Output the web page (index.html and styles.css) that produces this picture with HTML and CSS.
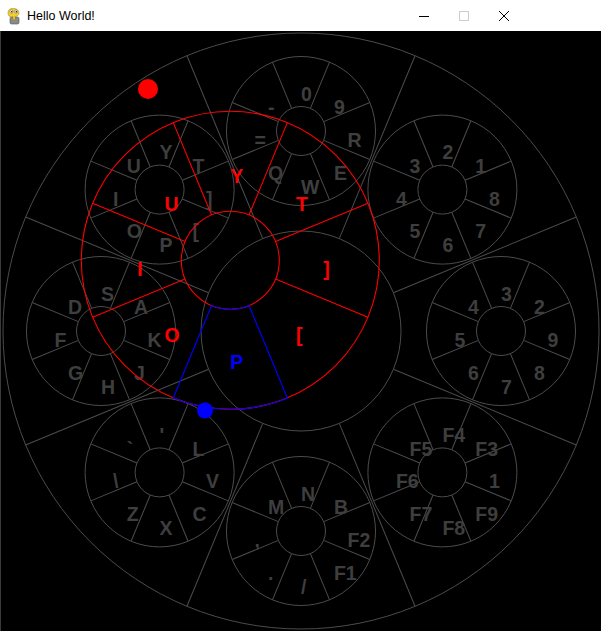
FILE: index.html
```html
<!DOCTYPE html>
<html lang="en">
<head>
<meta charset="utf-8">
<title>Hello World!</title>
<link rel="stylesheet" href="styles.css">
</head>
<body>
<div class="window">
  <header class="titlebar">
    <svg class="app-icon" width="16" height="18" viewBox="0 0 16 18" aria-hidden="true">
      <rect class="pad" x="4" y="10" width="9" height="7" rx="1.5"/>
      <path class="snake" d="M3 9 C1 6 2 2 6 1.5 C10 1 13 3 13 6 C13 8 11 9.5 9 9.5 L9 12 C9 13 7 13 7 12 L7 9.5 C5.5 9.5 4 9.8 3 9 Z"/>
      <circle class="eye" cx="5.5" cy="4.5" r="1.6"/>
      <circle class="eye" cx="10" cy="4.5" r="1.6"/>
      <circle class="pupil" cx="5.8" cy="4.7" r="0.7"/>
      <circle class="pupil" cx="10.3" cy="4.7" r="0.7"/>
    </svg>
    <span class="title">Hello World!</span>
    <div class="controls">
      <span class="ctl"><svg width="10" height="10" viewBox="0 0 10 10"><line class="ico" x1="0" y1="5.5" x2="10" y2="5.5"/></svg></span>
      <span class="ctl"><svg width="10" height="10" viewBox="0 0 10 10"><rect class="ico dim" x="0.5" y="0.5" width="9" height="9"/></svg></span>
      <span class="ctl"><svg width="10" height="10" viewBox="0 0 10 10"><path class="ico" d="M0 0 L10 10 M10 0 L0 10"/></svg></span>
    </div>
  </header>
  <main class="canvas">
    <svg class="scene" width="601" height="600" viewBox="0 31 601 600">
      <defs>
        <g id="wheel">
          <circle r="74.5"/>
          <circle r="24.5"/>
          <line x1="24.5" x2="74.5" transform="rotate(22.5)"/>
          <line x1="24.5" x2="74.5" transform="rotate(67.5)"/>
          <line x1="24.5" x2="74.5" transform="rotate(112.5)"/>
          <line x1="24.5" x2="74.5" transform="rotate(157.5)"/>
          <line x1="24.5" x2="74.5" transform="rotate(-22.5)"/>
          <line x1="24.5" x2="74.5" transform="rotate(-67.5)"/>
          <line x1="24.5" x2="74.5" transform="rotate(-112.5)"/>
          <line x1="24.5" x2="74.5" transform="rotate(-157.5)"/>
        </g>
      </defs>

      <g class="grid">
        <circle cx="301" cy="331" r="298"/>
        <circle cx="301" cy="331" r="100"/>
        <g transform="translate(301,331)">
          <line x1="100" x2="298" transform="rotate(22.5)"/>
          <line x1="100" x2="298" transform="rotate(67.5)"/>
          <line x1="100" x2="298" transform="rotate(112.5)"/>
          <line x1="100" x2="298" transform="rotate(157.5)"/>
          <line x1="100" x2="298" transform="rotate(-22.5)"/>
          <line x1="100" x2="298" transform="rotate(-67.5)"/>
          <line x1="100" x2="298" transform="rotate(-112.5)"/>
          <line x1="100" x2="298" transform="rotate(-157.5)"/>
        </g>
        <use href="#wheel" x="301" y="131"/>
        <use href="#wheel" x="442.4" y="189.6"/>
        <use href="#wheel" x="501" y="331"/>
        <use href="#wheel" x="442.4" y="472.4"/>
        <use href="#wheel" x="301" y="531"/>
        <use href="#wheel" x="159.6" y="472.4"/>
        <use href="#wheel" x="101" y="331"/>
        <use href="#wheel" x="159.6" y="189.6"/>
      </g>

      <g class="keys">
        <g transform="translate(301,131)">
          <text x="0" y="-30.5">0</text><text x="32.9" y="-16.9">9</text><text x="46.5" y="16">R</text><text x="32.9" y="48.9">E</text>
          <text x="0" y="62.5">W</text><text x="-32.9" y="48.9">Q</text><text x="-46.5" y="16">=</text><text x="-32.9" y="-16.9">-</text>
        </g>
        <g transform="translate(442.4,189.6)">
          <text x="0" y="-30.5">2</text><text x="32.9" y="-16.9">1</text><text x="46.5" y="16">8</text><text x="32.9" y="48.9">7</text>
          <text x="0" y="62.5">6</text><text x="-32.9" y="48.9">5</text><text x="-46.5" y="16">4</text><text x="-32.9" y="-16.9">3</text>
        </g>
        <g transform="translate(501,331)">
          <text x="0" y="-30.5">3</text><text x="32.9" y="-16.9">2</text><text x="46.5" y="16">9</text><text x="32.9" y="48.9">8</text>
          <text x="0" y="62.5">7</text><text x="-32.9" y="48.9">6</text><text x="-46.5" y="16">5</text><text x="-32.9" y="-16.9">4</text>
        </g>
        <g transform="translate(442.4,472.4)">
          <text x="0" y="-30.5">F4</text><text x="32.9" y="-16.9">F3</text><text x="46.5" y="16">1</text><text x="32.9" y="48.9">F9</text>
          <text x="0" y="62.5">F8</text><text x="-32.9" y="48.9">F7</text><text x="-46.5" y="16">F6</text><text x="-32.9" y="-16.9">F5</text>
        </g>
        <g transform="translate(301,531)">
          <text x="0" y="-30.5">N</text><text x="32.9" y="-16.9">B</text><text x="46.5" y="16">F2</text><text x="32.9" y="48.9">F1</text>
          <text x="0" y="62.5">/</text><text x="-32.9" y="48.9">.</text><text x="-46.5" y="16">,</text><text x="-32.9" y="-16.9">M</text>
        </g>
        <g transform="translate(159.6,472.4)">
          <text x="0" y="-30.5">'</text><text x="32.9" y="-16.9">L</text><text x="46.5" y="16">V</text><text x="32.9" y="48.9">C</text>
          <text x="0" y="62.5">X</text><text x="-32.9" y="48.9">Z</text><text x="-46.5" y="16">\</text><text x="-32.9" y="-16.9">`</text>
        </g>
        <g transform="translate(101,331)">
          <text x="0" y="-30.5">S</text><text x="32.9" y="-16.9">A</text><text x="46.5" y="16">K</text><text x="32.9" y="48.9">J</text>
          <text x="0" y="62.5">H</text><text x="-32.9" y="48.9">G</text><text x="-46.5" y="16">F</text><text x="-32.9" y="-16.9">D</text>
        </g>
        <g transform="translate(159.6,189.6)">
          <text x="0" y="-30.5">Y</text><text x="32.9" y="-16.9">T</text><text x="46.5" y="16">]</text><text x="32.9" y="48.9">[</text>
          <text x="0" y="62.5">P</text><text x="-32.9" y="48.9">O</text><text x="-46.5" y="16">I</text><text x="-32.9" y="-16.9">U</text>
        </g>
      </g>

      <g class="focus" transform="translate(230.3,260.3)">
        <circle class="red-line" r="149"/>
        <circle class="red-line" r="49"/>
        <line class="red-line" x1="49" x2="149" transform="rotate(22.5)"/>
        <line class="red-line" x1="49" x2="149" transform="rotate(157.5)"/>
        <line class="red-line" x1="49" x2="149" transform="rotate(-22.5)"/>
        <line class="red-line" x1="49" x2="149" transform="rotate(-67.5)"/>
        <line class="red-line" x1="49" x2="149" transform="rotate(-112.5)"/>
        <line class="red-line" x1="49" x2="149" transform="rotate(-157.5)"/>
        <path class="blue-line" d="M18.75 45.27 L57.02 137.66 A149 149 0 0 1 -57.02 137.66 L-18.75 45.27 A49 49 0 0 0 18.75 45.27 Z"/>
        <g class="red-keys">
          <text x="0" y="-77">Y</text><text x="65.8" y="-49.8">T</text><text x="93" y="16">]</text><text x="65.8" y="81.8">[</text>
          <text class="blue-key" x="0" y="109">P</text><text x="-65.8" y="81.8">O</text><text x="-93" y="16">I</text><text x="-65.8" y="-49.8">U</text>
        </g>
      </g>

      <circle class="dot-red" cx="148" cy="89" r="10"/>
      <circle class="dot-blue" cx="205" cy="410.5" r="8"/>
    </svg>
  </main>
</div>
</body>
</html>
```

FILE: styles.css
```css
html, body {
  margin: 0;
  padding: 0;
  background: #000;
}

.window {
  width: 601px;
  height: 631px;
  overflow: hidden;
  background: #000;
}

.titlebar {
  height: 31px;
  background: #fff;
  display: flex;
  align-items: center;
  font-family: "Liberation Sans", Arial, sans-serif;
  font-size: 12.5px;
  color: #000;
}

.app-icon {
  margin-left: 6px;
  margin-top: 1px;
}

.app-icon .snake { fill: #f2cf2e; stroke: #b08a10; stroke-width: 0.6; }
.app-icon .pad { fill: #8a8a8a; stroke: #555; stroke-width: 0.6; }
.app-icon .eye { fill: #fff; stroke: #444; stroke-width: 0.4; }
.app-icon .pupil { fill: #000; }

.title {
  margin-left: 5px;
  margin-top: 1px;
}

.controls {
  margin-left: auto;
  margin-right: 77px;
  display: flex;
  height: 31px;
}

.ctl {
  width: 40px;
  display: flex;
  align-items: center;
  justify-content: center;
}

.ctl svg { display: block; }

.ico {
  fill: none;
  stroke: #000;
  stroke-width: 1;
}

.ico.dim { stroke: #cccccc; }

.canvas {
  display: block;
  height: 600px;
  border-left: 1px solid #3a3a3a;
  box-sizing: border-box;
  margin: 0;
}

.scene {
  display: block;
  margin-left: -1px;
}

.grid, #wheel {
  fill: none;
  stroke: #4c4c4c;
  stroke-width: 1;
}

.keys text,
.red-keys text {
  font-family: "Liberation Sans", Arial, sans-serif;
  font-weight: bold;
  font-size: 19.5px;
}

.keys text { fill: #3e3e3e; }

.red-line {
  fill: none;
  stroke: #ff0000;
  stroke-width: 1.1;
}

.blue-line {
  fill: none;
  stroke: #0000ff;
  stroke-width: 1.1;
}

.red-keys text { fill: #ff0000; }
.red-keys text.blue-key { fill: #0000ff; }

.dot-red { fill: #ff0000; }
.dot-blue { fill: #0000ff; }
```
